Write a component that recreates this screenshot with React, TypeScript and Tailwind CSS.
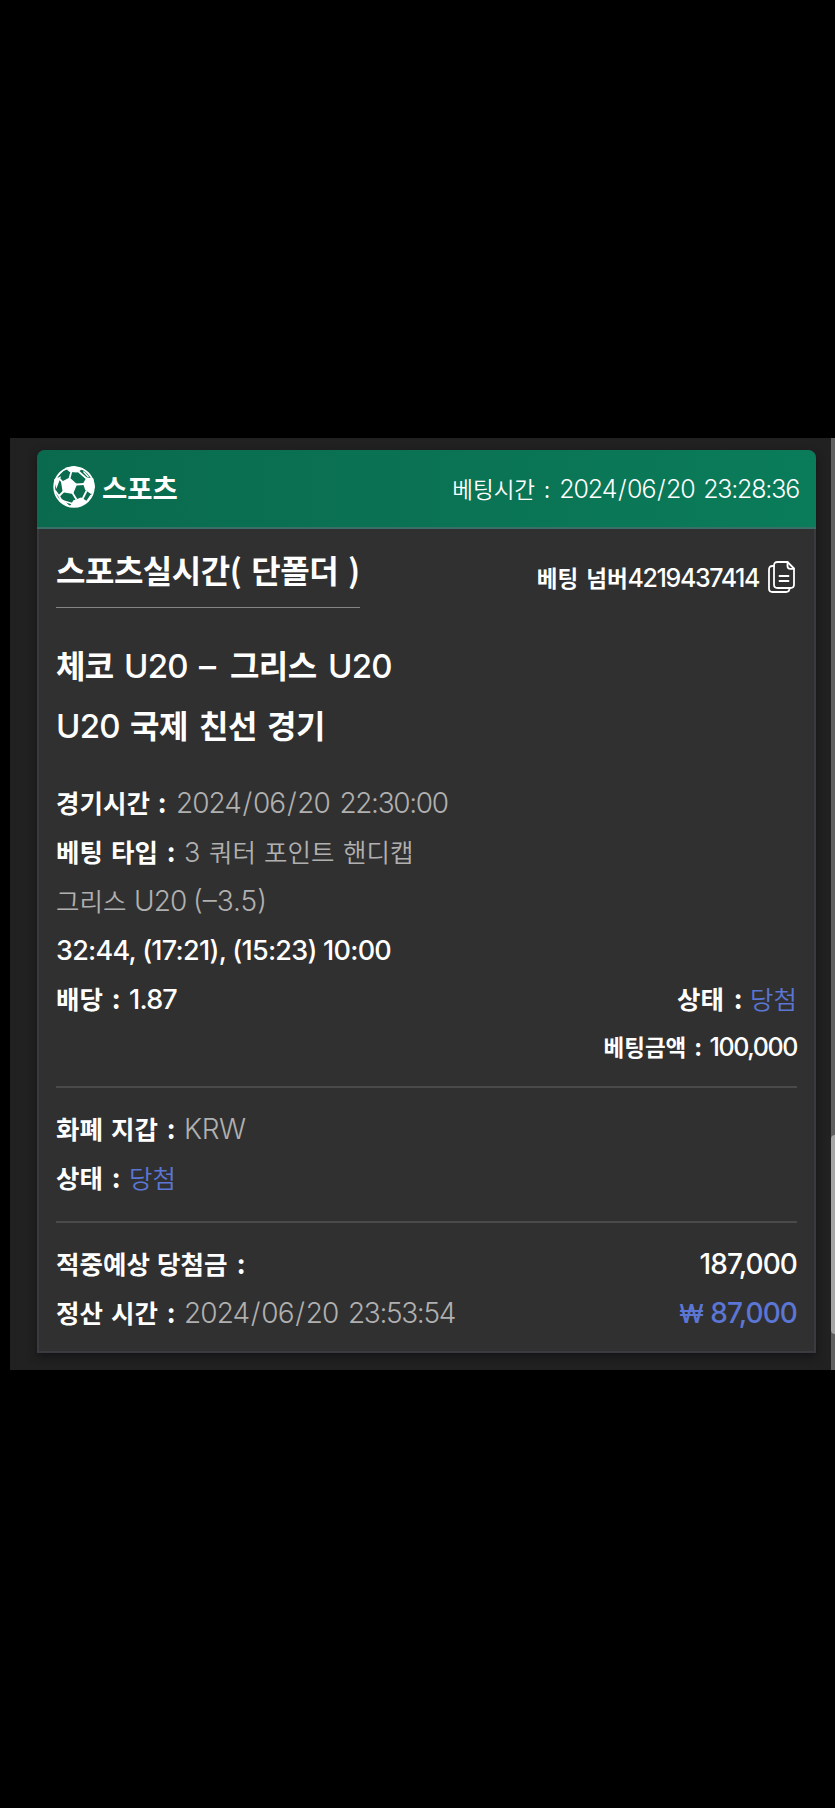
import type { FC, ReactNode } from "react";

type TextProps = { className?: string; children: ReactNode };

const Ko: FC<TextProps> = ({ className = "", children }) => (
	<span className={`font-['Noto_Sans_CJK_KR',sans-serif] whitespace-pre ${className}`}>{children}</span>
);

const En: FC<TextProps> = ({ className = "", children }) => (
	<span className={`font-[Inter,sans-serif] whitespace-pre ${className}`}>{children}</span>
);

const DateTime: FC<{ date: string; time: string; className?: string }> = ({ date, time, className = "" }) => (
	<En className={`font-[350] ${className}`}>
		{date.split("/").map((part, i) => (
			<span key={i}>
				{i > 0 && <span className="mx-[0.06em]">/</span>}
				{part}
			</span>
		))}
		<span className="ml-[0.34em] tracking-[-0.048em]">{time}</span>
	</En>
);

const Row: FC<TextProps> = ({ className = "", children }) => (
	<div className={`flex items-baseline h-[49px] leading-[49px] ${className}`}>{children}</div>
);

const Label: FC<TextProps> = ({ className = "", children }) => (
	<Ko className={`text-[25.5px] font-bold shrink-0 ${className}`}>{children}</Ko>
);

const BallIcon: FC = () => (
	<svg width="42" height="42" viewBox="0 0 42 42" fill="none" stroke="white" strokeWidth="1.8">
		<circle cx="21" cy="21" r="19.8" />
		<path d="M9 16.5 16.5 12.5 23 18.5 19.5 27 10.5 25.5Z" fill="white" />
		<path d="M34 12.5 39.5 13 41 21 38 27 33 23.5 31 17.5Z" fill="white" />
		<path d="M14 2.5 21 1 28 2.8 24 5.5 17 5Z" fill="white" />
		<path d="M21 35 28 32.5 33 35.5 26 40 18.5 39.5Z" fill="white" />
		<path d="M2 14 6.5 12 3.5 20Z" fill="white" />
		<path d="M7 33 9.5 34.5 15 39.5 11 37.5Z" fill="white" />
		<path d="M16.5 12.5 18.5 5M6.5 13 10 16.5M23 18.5 31.5 18M19.5 27 23.5 33.5M10.5 25.5 6 30 8.5 34.5M2 24.5 6 30M25 5 33.5 12.5M33.5 25 29.5 33M8.5 34.5 19 37.5" />
		<path d="M30.5 5.5 35.5 11M38 29 34 35" strokeWidth="1.3" />
	</svg>
);

const CopyIcon: FC = () => (
	<svg width="27" height="32" viewBox="0 0 27 32" fill="none" stroke="white" strokeWidth="1.8" strokeLinecap="round" strokeLinejoin="round">
		<path d="M9.5 1H19.5L26 7.5V23.5Q26 27 22.5 27H9.5Q6 27 6 23.5V4.5Q6 1 9.5 1Z" />
		<path d="M19.5 1V5Q19.5 7.8 22.3 7.8H26" />
		<path d="M6 5H4.5Q1 5 1 8.5V27.5Q1 31 4.5 31H18Q21.5 31 21.5 27.3" />
		<path d="M11.5 15H20.5M11.5 20H20.5" />
	</svg>
);

const App: FC = () => {
	return (
		<main className="bg-black text-white w-[835px] h-[1808px] pt-[438px] pl-[10px]">
			<div className="flex h-[932px] bg-[#212121]">
				<div className="w-[821px] pt-[12px] pl-[27px] pr-[15px]">
					<article className="h-[903px] rounded-t-lg bg-[#303030] shadow-[0_4px_8px_rgba(16,16,22,0.7)]">
						<header className="flex items-center h-[79px] rounded-t-lg border-b-2 border-[#3a6f69] bg-linear-to-r from-[#0a6a4d] to-[#0a7c5a] pl-[16px] pr-[17px]">
							<div className="pb-[3px]">
								<BallIcon />
							</div>
							<Ko className="ml-[7px] pb-[2px] text-[27.5px] font-bold">스포츠</Ko>
							<div className="ml-auto flex items-baseline pt-[3px]">
								<Ko className="text-[22.5px] font-[350] w-[107px]">
									베팅시간<span className="ml-[9px]">:</span>
								</Ko>
								<DateTime className="text-[25px] tracking-[-0.043em]" date="2024/06/20" time="23:28:36" />
							</div>
						</header>

						<div className="h-[824px] border-2 border-t-0 border-[#3a3a3f] pl-[17px] pr-[17px]">
							<div className="flex justify-between h-[79px] pt-[14px]">
								<h1 className="flex h-[65px] w-[304px] border-b border-[#858585] text-[32px] leading-[52px] font-bold">
									<Ko className="w-[196px] tracking-[-0.5px]">스포츠실시간(</Ko>
									<Ko className="w-[97px] tracking-[-0.5px]">단폴더</Ko>
									<Ko>)</Ko>
								</h1>
								<div className="flex items-start pt-[8px]">
									<div className="flex items-baseline leading-[53px]">
										<Ko className="text-[22.5px] font-bold">베팅</Ko>
										<Ko className="ml-[8px] text-[22.5px] font-bold">넘버</Ko>
										<En className="text-[25px] font-medium tracking-[-1.4px]">4219437414</En>
									</div>
									<div className="ml-[9px] mr-[2px] pt-[10px]">
										<CopyIcon />
									</div>
								</div>
							</div>

							<h2 className="mt-[26px] flex items-baseline h-[60px] leading-[60px]">
								<Ko className="w-[68px] text-[32px] font-bold tracking-[-0.6px]">체코</Ko>
								<En className="w-[75px] text-[33px] font-medium tracking-[-0.8px]">U20</En>
								<En className="w-[31px] text-[34px] font-medium">–</En>
								<Ko className="w-[98px] text-[32px] font-bold tracking-[-0.6px]">그리스</Ko>
								<En className="text-[33px] font-medium tracking-[-0.8px]">U20</En>
							</h2>
							<h2 className="flex items-baseline h-[60px] leading-[60px]">
								<En className="w-[74px] text-[33px] font-medium tracking-[-0.8px]">U20</En>
								<Ko className="w-[69px] text-[32px] font-bold tracking-[-0.4px]">국제</Ko>
								<Ko className="w-[68px] text-[32px] font-bold tracking-[-0.4px]">친선</Ko>
								<Ko className="text-[32px] font-bold tracking-[-0.4px]">경기</Ko>
							</h2>

							<section className="mt-[23px]">
								<Row>
									<Label className="w-[102px]">경기시간</Label>
									<Label className="w-[18px]">:</Label>
									<DateTime className="text-[28px] tracking-[-0.035em] text-[#b0b0b0]" date="2024/06/20" time="22:30:00" />
								</Row>
								<Row>
									<Label className="w-[55px]">베팅</Label>
									<Label className="w-[56px]">타입</Label>
									<Label className="w-[17px]">:</Label>
									<En className="w-[25px] text-[27px] font-[350] text-[#b0b0b0]">3</En>
									<Ko className="w-[55px] text-[25.5px] font-[350] text-[#b0b0b0]">쿼터</Ko>
									<Ko className="w-[79px] text-[25.5px] font-[350] text-[#b0b0b0]">포인트</Ko>
									<Ko className="text-[25.5px] font-[350] text-[#b0b0b0]">핸디캡</Ko>
								</Row>
								<Row>
									<Ko className="w-[78px] text-[25.5px] font-[350] text-[#b0b0b0]">그리스</Ko>
									<En className="w-[59px] text-[28px] font-[350] tracking-[-0.9px] text-[#b0b0b0]">U20</En>
									<En className="text-[28px] font-[350] text-[#b0b0b0]">(–3.5)</En>
								</Row>
								<Row className="pt-[2px]">
									<En className="text-[27px] font-medium tracking-[-0.75px]">32:44, (17:21), (15:23) 10:00</En>
								</Row>
								<Row>
									<Label className="w-[56px]">배당</Label>
									<Label className="w-[17px]">:</Label>
									<En className="text-[27px] font-medium tracking-[-0.8px]">1.87</En>
									<Label className="ml-auto w-[57px]">상태</Label>
									<Label className="w-[16px]">:</Label>
									<Ko className="text-[25.5px] font-[350] text-[#5b76d4]">당첨</Ko>
								</Row>
								<Row className="justify-end">
									<Ko className="w-[91px] text-[22.5px] font-bold">베팅금액</Ko>
									<Ko className="w-[15px] text-[22.5px] font-bold">:</Ko>
									<En className="text-[25px] font-medium tracking-[-1.4px]">100,000</En>
								</Row>
							</section>

							<section className="mt-[15px] border-t-2 border-[#4a4a4a] pt-[15px]">
								<Row>
									<Label className="w-[55px]">화폐</Label>
									<Label className="w-[56px]">지갑</Label>
									<Label className="w-[17px]">:</Label>
									<En className="text-[28px] font-[350] tracking-[-0.4px] text-[#b0b0b0]">KRW</En>
								</Row>
								<Row>
									<Label className="w-[56px]">상태</Label>
									<Label className="w-[17px]">:</Label>
									<Ko className="text-[25.5px] font-[350] text-[#5b76d4]">당첨</Ko>
								</Row>
							</section>

							<section className="mt-[20px] border-t-2 border-[#4a4a4a] pt-[15px]">
								<Row>
									<Label className="w-[101px]">적중예상</Label>
									<Label className="w-[80px]">당첨금</Label>
									<Label>:</Label>
									<En className="ml-auto text-[28px] font-medium tracking-[-0.9px]">187,000</En>
								</Row>
								<Row>
									<Label className="w-[55px]">정산</Label>
									<Label className="w-[56px]">시간</Label>
									<Label className="w-[17px]">:</Label>
									<DateTime className="text-[28px] tracking-[-0.033em] text-[#b0b0b0]" date="2024/06/20" time="23:53:54" />
									<En className="ml-auto w-[31px] text-[25px] font-medium text-[#5b76d4]">₩</En>
									<En className="text-[28px] font-medium tracking-[-0.9px] text-[#5b76d4]">87,000</En>
								</Row>
							</section>
						</div>
					</article>
				</div>
				<div className="w-[4px] bg-[#606060] pt-[697px]">
					<div className="h-[199px] rounded-l-sm bg-[#a6a6a6]" />
				</div>
			</div>
		</main>
	);
};

export default App;
